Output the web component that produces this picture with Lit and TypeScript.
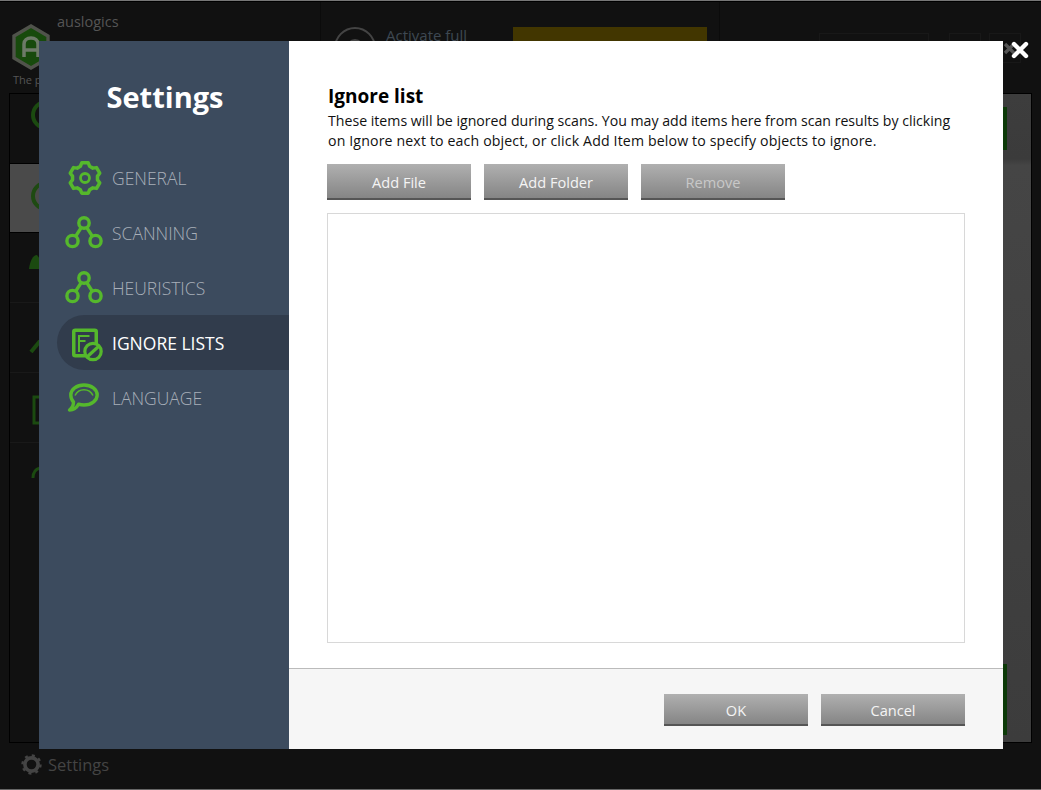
import { LitElement, html, css, svg } from "lit";
import { customElement } from "lit/decorators.js";

const FONT = `"Open Sans", "Noto Sans", sans-serif`;

function gearPath(cx: number, cy: number, outer: number, inner: number, teeth: number, rot = 0) {
  const pts: string[] = [];
  const step = (Math.PI * 2) / teeth;
  for (let i = 0; i < teeth; i++) {
    const a = rot + i * step;
    const p = (r: number, d: number) => `${(cx + r * Math.cos(a + d)).toFixed(2)} ${(cy + r * Math.sin(a + d)).toFixed(2)}`;
    pts.push(p(inner, -step * 0.36), p(outer, -step * 0.2), p(outer, step * 0.2), p(inner, step * 0.36));
  }
  return "M" + pts.join("L") + "Z";
}

const G = "#55b82c";

const gearIcon = html`<svg class="ico" viewBox="0 0 40 40" fill="none" stroke=${G}>
  <path d=${gearPath(21, 20, 15.5, 12.6, 6, -Math.PI / 2)} stroke-width="3.5" stroke-linejoin="round"></path>
  <circle cx="21" cy="20" r="4.5" stroke-width="2.8"></circle>
</svg>`;

const netIcon = html`<svg class="ico" viewBox="0 0 40 40" fill="none" stroke=${G} stroke-width="3.4">
  <circle cx="20" cy="10" r="5.2"></circle>
  <circle cx="8.5" cy="28" r="5.6"></circle>
  <circle cx="31.5" cy="28" r="5.6"></circle>
  <path d="M17.2 14.6 11.6 23.4M22.8 14.6 28.4 23.4"></path>
</svg>`;

const ignoreIcon = html`<svg class="ico" viewBox="0 0 40 40" fill="none" stroke=${G}>
  <rect x="9.75" y="7.25" width="22.5" height="25.5" rx="1.5" stroke-width="3.5"></rect>
  <path d="M14.5 13h11M14.5 18h7" stroke-width="2.2"></path>
  <path d="M15 12v17" stroke-width="2"></path>
  <circle cx="29" cy="28.5" r="8.2" fill="#313c4c" stroke-width="3.2"></circle>
  <path d="M23.5 33.5 34.5 23.5" stroke-width="3.2"></path>
</svg>`;

const langIcon = html`<svg class="ico" viewBox="0 0 40 40" fill="none" stroke=${G}>
  <path d="M9.5 24C9.5 27 8 30 5.5 32 9 32 12.5 30 14.5 26.2 16.2 26.7 18 27 20 27 27.3 27 33.2 22.5 33.2 17 33.2 11.5 27.3 7 20 7 12.7 7 6.8 11.5 6.8 17 6.8 19.8 7.8 22.2 9.5 24Z" stroke-width="3.4" stroke-linejoin="round"></path>
  <path d="M11 17.5C13 13.5 16 11.8 20 11.8 24 11.8 27 13.5 29 17.5" stroke-width="1.6"></path>
</svg>`;

const bgRows = [
  svg`<circle cx="36" cy="21" r="13" fill="none" stroke="#1b4a10" stroke-width="4"></circle>`,
  svg`<circle cx="36" cy="32" r="13" fill="none" stroke="#1e4a12" stroke-width="4"></circle>`,
  svg`<path d="M19 36C20 28 23 22 27 22L30 26V36Z" fill="#1b4a10"></path>`,
  svg`<path d="M21 49 30 38" stroke="#1b4a10" stroke-width="4" fill="none"></path>`,
  svg`<rect x="24" y="24" width="12" height="26" fill="none" stroke="#1b4a10" stroke-width="3"></rect>`,
  svg`<path d="M23 35C23 29 26 26 30 25" stroke="#1b4a10" stroke-width="3" fill="none"></path>`,
];

@customElement("app-root")
export class AppRoot extends LitElement {
  static styles = css`
    :host {
      display: block;
      position: relative;
      width: 1041px;
      height: 790px;
      overflow: hidden;
      background: #111111;
      font-family: ${css([FONT] as unknown as TemplateStringsArray)};
    }
    .backdrop {
      height: 790px;
      display: flex;
      flex-direction: column;
      border-top: 1px solid #777;
      border-bottom: 1px solid #666;
      box-sizing: border-box;
    }
    .app-head {
      height: 92px;
      flex: none;
      display: flex;
      box-sizing: border-box;
      border-top: 1px solid #000;
    }
    .brand {
      width: 320px;
      flex: none;
      box-sizing: border-box;
      padding: 11px 0 0 12px;
      display: grid;
      grid-template-columns: 45px 1fr;
      grid-template-rows: 60px auto;
      color: #555;
    }
    .brand-name {
      font-size: 14.5px;
      line-height: 18px;
    }
    .brand-tag {
      grid-column: 1 / 3;
      font-size: 11px;
      line-height: 14px;
      padding-left: 1px;
      white-space: nowrap;
    }
    .hex {
      width: 38px;
      height: 46px;
      margin-top: 11px;
    }
    .activate {
      width: 400px;
      flex: none;
      box-sizing: border-box;
      border-left: 1px solid #0b0b0b;
      border-right: 1px solid #0b0b0b;
      display: flex;
      padding: 24px 13px 0 11px;
      gap: 9px;
    }
    .ring {
      width: 44px;
      height: 44px;
      flex: none;
      margin-left: 1px;
    }
    .act-text {
      width: 118px;
      font-size: 15px;
      line-height: 18px;
      color: #3e4852;
      white-space: nowrap;
      flex: none;
    }
    .buy {
      width: 194px;
      height: 40px;
      margin-top: 1px;
      background: #423600;
      flex: none;
    }
    .tools {
      flex: 1;
      display: flex;
      padding: 31px 0 0 99px;
      gap: 20px;
      align-items: flex-start;
    }
    .tool {
      height: 30px;
      width: 32px;
      border: 1px solid #181818;
      box-sizing: border-box;
      flex: none;
    }
    .tool.wide {
      width: 110px;
    }
    .tool.min {
      margin-left: -12px;
    }
    .app-main {
      flex: 1;
      display: flex;
      margin: 0 9px;
      border: 1px solid #000;
      min-height: 0;
    }
    .rows {
      width: 320px;
      flex: none;
      display: flex;
      flex-direction: column;
    }
    .row {
      height: 70px;
      flex: none;
      border-bottom: 1px solid #191919;
      box-sizing: border-box;
      display: block;
    }
    .row:last-child {
      border-bottom: 0;
    }
    .row svg {
      display: block;
      width: 60px;
      height: 70px;
    }
    .row.first {
      border-bottom: 1px solid #000;
    }
    .row.sel {
      height: 69px;
      background: #4a4a4a;
      border-bottom: 1px solid #000;
    }
    .pane {
      flex: 1;
      display: flex;
      flex-direction: column;
      background: linear-gradient(180deg, #3d3d3d 0%, #3b3b3b 10%, #454545 11%, #3c3c3c 100%);
      padding: 13px 25px 7px 0;
    }
    .pane-green {
      height: 43px;
      flex: none;
      background: #0c3a08;
      margin-left: auto;
      width: 8px;
      margin-right: -1px;
      align-self: flex-end;
    }
    .pane-gap {
      flex: 1;
    }
    .pane-green.big {
      height: 71px;
    }
    .foot {
      height: 46px;
      flex: none;
      display: flex;
      align-items: center;
      box-sizing: border-box;
      padding: 0 0 4px 21px;
      gap: 6px;
      color: #444;
      font-size: 16.5px;
    }
    .foot svg {
      width: 21px;
      height: 21px;
    }

    .dialog {
      position: absolute;
      left: 39px;
      top: 41px;
      width: 964px;
      height: 708px;
      display: flex;
    }
    .side {
      width: 250px;
      flex: none;
      background: #3c4b5e;
      padding-top: 36px;
      box-sizing: border-box;
    }
    .side h1 {
      margin: 0 0 33px;
      font-size: 29px;
      line-height: 40px;
      font-weight: 700;
      color: #fff;
      text-align: center;
      padding-left: 2px;
    }
    .nav {
      display: flex;
      flex-direction: column;
      padding-left: 18px;
    }
    .nav-item {
      height: 55px;
      display: flex;
      align-items: center;
      font-size: 17.5px;
      font-weight: 300;
      color: #a8afb9;
      padding-left: 7px;
      gap: 8px;
    }
    .nav-item.on {
      background: #313c4c;
      border-radius: 28px 0 0 28px;
      color: #fff;
      font-weight: 400;
    }
    .ico {
      width: 40px;
      height: 40px;
      flex: none;
    }
    .content {
      flex: 1;
      background: #fff;
      display: flex;
      flex-direction: column;
      min-width: 0;
    }
    .body {
      flex: 1;
      padding: 41px 38px 25px 38px;
      display: flex;
      flex-direction: column;
      min-height: 0;
    }
    .body h2 {
      margin: 0 0 0 1px;
      font-size: 19px;
      line-height: 29px;
      font-weight: 700;
      color: #000;
    }
    .body p {
      margin: 0 0 13px 1px;
      font-size: 14.15px;
      line-height: 20px;
      color: #111;
      white-space: nowrap;
    }
    .line-two {
      letter-spacing: 0.14px;
    }
    .btns {
      display: flex;
      gap: 13px;
      margin-bottom: 13px;
    }
    .btn {
      width: 144px;
      height: 36px;
      border: 0;
      border-bottom: 2px solid #555;
      padding: 2px 0 0;
      background: linear-gradient(180deg, #b0b0b0, #858585);
      color: #f4f4f4;
      font: inherit;
      font-size: 14.6px;
      line-height: 30px;
      text-align: center;
      box-sizing: border-box;
      flex: none;
    }
    .btn.off {
      color: #c8c8c8;
    }
    .btn.small {
      height: 32px;
      padding-top: 2px;
      line-height: 28px;
    }
    .list {
      flex: 1;
      border: 1px solid #d8d8d8;
      background: #fff;
    }
    .actions {
      height: 81px;
      flex: none;
      box-sizing: border-box;
      background: #f6f6f6;
      border-top: 1px solid #bbb;
      display: flex;
      justify-content: flex-end;
      gap: 13px;
      padding: 25px 38px 0 0;
    }
    .close {
      position: absolute;
      left: 1010px;
      top: 40px;
      width: 20px;
      height: 20px;
      display: block;
    }
    .close-dim {
      position: absolute;
      left: 1003px;
      top: 42px;
      width: 13px;
      height: 13px;
      display: block;
    }
  `;

  render() {
    return html`
      <div class="backdrop">
        <div class="app-head">
          <div class="brand">
            <svg class="hex" viewBox="0 0 38 46">
              <path d="M19 2 36 12V34L19 44 2 34V12Z" fill="#174a0c" stroke="#50534b" stroke-width="3.4"></path>
              <path d="M12 33V20C12 16 15 14 19 14 23 14 26 16 26 20V33M12 26H26" fill="none" stroke="#6d7a68" stroke-width="3.5"></path>
            </svg>
            <div class="brand-name">auslogics</div>
            <div class="brand-tag">The program is</div>
          </div>
          <div class="activate">
            <svg class="ring" viewBox="0 0 44 44" fill="none" stroke="#444">
              <circle cx="22" cy="22" r="20" stroke-width="2"></circle>
              <circle cx="22" cy="22" r="8" stroke-width="2"></circle>
            </svg>
            <div class="act-text">Activate full</div>
            <div class="buy"></div>
          </div>
          <div class="tools">
            <div class="tool wide"></div>
            <div class="tool"></div>
            <div class="tool min"></div>
          </div>
        </div>
        <div class="app-main">
          <div class="rows">
            ${bgRows.map(
              (r, i) => html`<div class="row ${i === 0 ? "first" : ""} ${i === 1 ? "sel" : ""}"><svg viewBox="0 0 60 70">${r}</svg></div>`,
            )}
          </div>
          <div class="pane">
            <div class="pane-green"></div>
            <div class="pane-gap"></div>
            <div class="pane-green big"></div>
          </div>
        </div>
        <div class="foot">
          <svg viewBox="0 0 21 21" fill="none" stroke="#444">
            <circle cx="10.5" cy="10.5" r="6.6" stroke-width="3.6"></circle>
            <circle cx="10.5" cy="10.5" r="9" stroke-width="2.4" stroke-dasharray="3 4.07"></circle>
          </svg>
          <span>Settings</span>
        </div>
      </div>

      <svg class="close-dim" viewBox="0 0 13 13"><path d="M2 2 11 11M11 2 2 11" stroke="#555" stroke-width="3.2"></path></svg>

      <div class="dialog">
        <div class="side">
          <h1>Settings</h1>
          <div class="nav">
            <div class="nav-item">${gearIcon}GENERAL</div>
            <div class="nav-item">${netIcon}SCANNING</div>
            <div class="nav-item">${netIcon}HEURISTICS</div>
            <div class="nav-item on">${ignoreIcon}IGNORE LISTS</div>
            <div class="nav-item">${langIcon}LANGUAGE</div>
          </div>
        </div>
        <div class="content">
          <div class="body">
            <h2>Ignore list</h2>
            <p>These items will be ignored during scans. You may add items here from scan results by clicking<br /><span class="line-two">on Ignore next to each object, or click Add Item below to specify objects to ignore.</span></p>
            <div class="btns">
              <button class="btn">Add File</button>
              <button class="btn">Add Folder</button>
              <button class="btn off">Remove</button>
            </div>
            <div class="list"></div>
          </div>
          <div class="actions">
            <button class="btn small">OK</button>
            <button class="btn small">Cancel</button>
          </div>
        </div>
      </div>

      <svg class="close" viewBox="0 0 20 20"><path d="M4 4 16 16M16 4 4 16" stroke="#fff" stroke-width="4.4" stroke-linecap="round"></path></svg>
    `;
  }
}
